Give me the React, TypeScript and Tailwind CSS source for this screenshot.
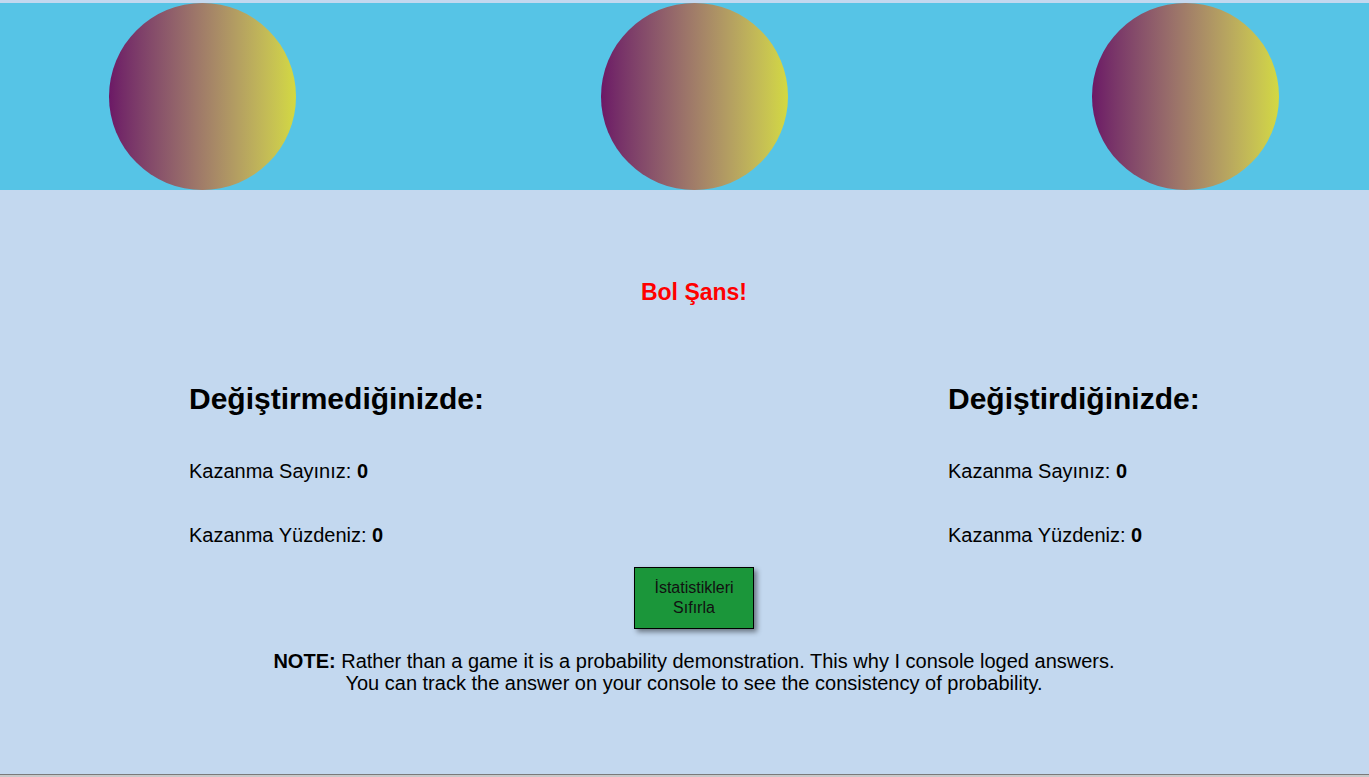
export default function App() {
  const circles = [0, 1, 2];

  return (
    <div className="min-h-[777px] w-full bg-[#c3d8ef] font-['Liberation_Sans',Arial,sans-serif] text-black flex flex-col">
      <div className="h-[3px]" />
      <div className="h-[187px] bg-[#56c4e6] flex pl-[109px] gap-[304.5px]">
        {circles.map((i) => (
          <div
            key={i}
            className="w-[187px] h-[187px] rounded-full bg-gradient-to-r from-[#6c1866] to-[#d3d941]"
          />
        ))}
      </div>

      <div className="flex-1 flex flex-col">
        <div className="pl-[19px]">
          <p className="mt-[89px] text-center text-[23px] font-bold text-[#ff0000] leading-[26px]">Bol Şans!</p>
        </div>

        <div className="mt-[76px] flex pl-[189px]">
          <div className="w-[759px]">
            <h2 className="text-[30px] font-bold leading-[36px]">Değiştirmediğinizde:</h2>
            <p className="mt-[42px] text-[20px] leading-[24px]">
              Kazanma Sayınız: <b>0</b>
            </p>
            <p className="mt-[40px] text-[20px] leading-[24px]">
              Kazanma Yüzdeniz: <b>0</b>
            </p>
          </div>
          <div>
            <h2 className="text-[30px] font-bold leading-[36px]">Değiştirdiğinizde:</h2>
            <p className="mt-[42px] text-[20px] leading-[24px]">
              Kazanma Sayınız: <b>0</b>
            </p>
            <p className="mt-[40px] text-[20px] leading-[24px]">
              Kazanma Yüzdeniz: <b>0</b>
            </p>
          </div>
        </div>

        <div className="flex justify-center mt-[20px] pl-[19px]">
          <button className="w-[120px] h-[62px] bg-[#1b963a] border border-black text-[16px] leading-[20px] text-[#111] shadow-[3px_3px_5px_rgba(0,0,0,0.45)]">
            İstatistikleri
            <br />
            Sıfırla
          </button>
        </div>

        <div className="pl-[19px]">
          <p className="mt-[21px] text-center text-[20px] leading-[22px]">
            <b>NOTE:</b> Rather than a game it is a probability demonstration. This why I console loged answers.
            <br />
            You can track the answer on your console to see the consistency of probability.
          </p>
        </div>
      </div>

      <div className="h-[3px] bg-[#c9c9c9] border-t border-[#7a7a7a]" />
    </div>
  );
}
